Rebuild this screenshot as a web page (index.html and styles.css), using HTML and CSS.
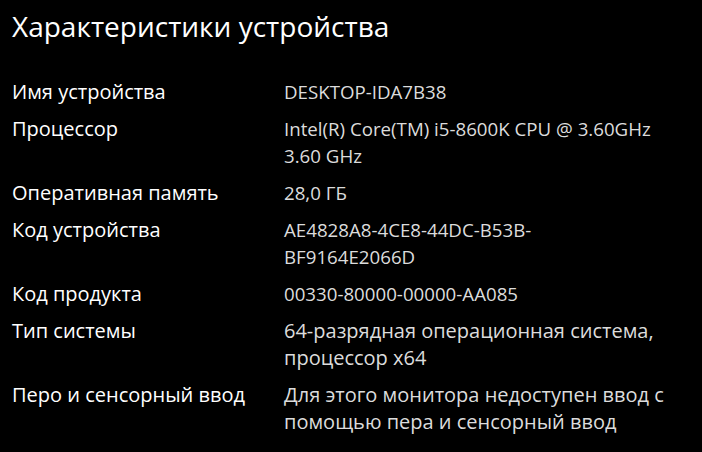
FILE: index.html
```html
<!DOCTYPE html>
<html lang="ru">
<head>
<meta charset="utf-8">
<link rel="stylesheet" href="styles.css">
</head>
<body>
<main class="page">
  <h1 class="title">Характеристики устройства</h1>
  <dl class="specs">
    <dt>Имя устройства</dt>
    <dd class="latin">DESKTOP-IDA7B38</dd>
    <dt>Процессор</dt>
    <dd class="latin">Intel(R) Core(TM) i5-8600K CPU @ 3.60GHz<br>3.60 GHz</dd>
    <dt>Оперативная память</dt>
    <dd class="latin">28,0 ГБ</dd>
    <dt>Код устройства</dt>
    <dd class="latin">AE4828A8-4CE8-44DC-B53B-<br>BF9164E2066D</dd>
    <dt>Код продукта</dt>
    <dd class="latin">00330-80000-00000-AA085</dd>
    <dt>Тип системы</dt>
    <dd>64-разрядная операционная система,<br>процессор x64</dd>
    <dt>Перо и сенсорный ввод</dt>
    <dd>Для этого монитора недоступен ввод с<br>помощью пера и сенсорный ввод</dd>
  </dl>
</main>
</body>
</html>
```

FILE: styles.css
```css
html, body {
  margin: 0;
  padding: 0;
  background: #000;
}
.page {
  width: 702px;
  height: 452px;
  box-sizing: border-box;
  padding: 6px 0 0 12px;
  font-family: "Open Sans", "Noto Sans", sans-serif;
  color: #fff;
  overflow: hidden;
}
.title {
  margin: 0;
  font-size: 28px;
  font-weight: 400;
  line-height: 40px;
}
.specs {
  margin: 32px 0 0 0;
  display: grid;
  grid-template-columns: 272px auto;
  row-gap: 10px;
  font-size: 20px;
  line-height: 27px;
}
.specs dt {
  margin: 0;
  color: #fff;
}
.specs dd {
  margin: 0;
  color: #dcdcdc;
}
.specs dd.latin {
  font-size: 18.7px;
}
```
